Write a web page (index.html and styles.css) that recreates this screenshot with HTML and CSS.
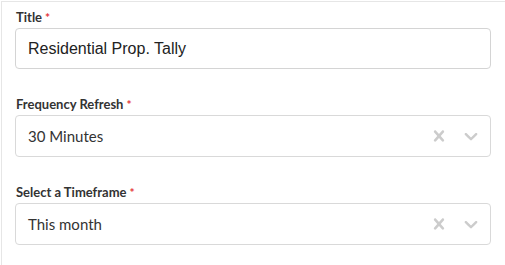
FILE: index.html
```html
<!DOCTYPE html>
<html lang="en">
<head>
    <meta charset="UTF-8">
    <meta name="viewport" content="width=device-width, initial-scale=1.0">
    <title>Widget Settings</title>
    <link rel="stylesheet" href="styles.css">
</head>
<body>
    <div class="panel">
        <div class="field">
            <label class="field-label" for="title">Title<span class="req">*</span></label>
            <input class="text-input" type="text" id="title" value="Residential Prop. Tally">
        </div>

        <div class="field">
            <div class="field-label">Frequency Refresh<span class="req">*</span></div>
            <div class="select">
                <div class="select-value">30 Minutes</div>
                <div class="select-indicators">
                    <span class="indicator">
                        <svg viewBox="0 0 20 20" width="22" height="22"><path d="M14.348 14.849c-0.469 0.469-1.229 0.469-1.697 0l-2.651-3.030-2.651 3.029c-0.469 0.469-1.229 0.469-1.697 0-0.469-0.469-0.469-1.229 0-1.697l2.758-3.15-2.759-3.152c-0.469-0.469-0.469-1.228 0-1.697s1.228-0.469 1.697 0l2.652 3.031 2.651-3.031c0.469-0.469 1.228-0.469 1.697 0s0.469 1.229 0 1.697l-2.758 3.152 2.758 3.150c0.469 0.469 0.469 1.229 0 1.698z"/></svg>
                    </span>
                    <span class="indicator">
                        <svg viewBox="0 0 20 20" width="22" height="22"><path d="M4.516 7.548c0.436-0.446 1.043-0.481 1.576 0l3.908 3.747 3.908-3.747c0.533-0.481 1.141-0.446 1.574 0 0.436 0.445 0.408 1.197 0 1.615-0.406 0.418-4.695 4.502-4.695 4.502-0.217 0.223-0.502 0.335-0.787 0.335s-0.57-0.112-0.789-0.335c0 0-4.287-4.084-4.695-4.502s-0.436-1.17 0-1.615z"/></svg>
                    </span>
                </div>
            </div>
        </div>

        <div class="field">
            <div class="field-label">Select a Timeframe<span class="req">*</span></div>
            <div class="select">
                <div class="select-value">This month</div>
                <div class="select-indicators">
                    <span class="indicator">
                        <svg viewBox="0 0 20 20" width="22" height="22"><path d="M14.348 14.849c-0.469 0.469-1.229 0.469-1.697 0l-2.651-3.030-2.651 3.029c-0.469 0.469-1.229 0.469-1.697 0-0.469-0.469-0.469-1.229 0-1.697l2.758-3.15-2.759-3.152c-0.469-0.469-0.469-1.228 0-1.697s1.228-0.469 1.697 0l2.652 3.031 2.651-3.031c0.469-0.469 1.228-0.469 1.697 0s0.469 1.229 0 1.697l-2.758 3.152 2.758 3.150c0.469 0.469 0.469 1.229 0 1.698z"/></svg>
                    </span>
                    <span class="indicator">
                        <svg viewBox="0 0 20 20" width="22" height="22"><path d="M4.516 7.548c0.436-0.446 1.043-0.481 1.576 0l3.908 3.747 3.908-3.747c0.533-0.481 1.141-0.446 1.574 0 0.436 0.445 0.408 1.197 0 1.615-0.406 0.418-4.695 4.502-4.695 4.502-0.217 0.223-0.502 0.335-0.787 0.335s-0.57-0.112-0.789-0.335c0 0-4.287-4.084-4.695-4.502s-0.436-1.17 0-1.615z"/></svg>
                    </span>
                </div>
            </div>
        </div>
    </div>
</body>
</html>
```

FILE: styles.css
```css
* {
    margin: 0;
    padding: 0;
    box-sizing: border-box;
}

body {
    background: #ffffff;
    font-family: 'Lato', 'Noto Sans', sans-serif;
    color: #333333;
    overflow: hidden;
}

.panel {
    margin: 1px 0 0 1px;
    border-top: 1px solid #e6e6e6;
    border-left: 1px solid #e6e6e6;
    padding: 7px 14px 0 13px;
    min-height: 264px;
}

.field {
    margin-bottom: 27px;
}

.field-label {
    display: block;
    font-size: 13px;
    font-weight: 700;
    line-height: 16px;
    color: #333333;
    margin-bottom: 2px;
    padding-left: 1px;
}

.req {
    color: #e5343a;
    font-size: 12px;
    margin-left: 3px;
}

.text-input {
    display: block;
    width: 100%;
    height: 41px;
    border: 1px solid #d4d4d4;
    border-radius: 4px;
    padding: 0 12px;
    font-family: 'Liberation Sans', Arial, sans-serif;
    font-size: 16px;
    color: #222222;
    background: #ffffff;
    outline: none;
}

.select {
    display: flex;
    align-items: center;
    height: 42px;
    border: 1px solid #d9d9d9;
    border-radius: 4px;
    background: #ffffff;
}

.select-value {
    flex: 1;
    padding-left: 12px;
    font-size: 15px;
    color: #333333;
}

.select-indicators {
    display: flex;
    align-items: center;
    padding-right: 3px;
}

.indicator {
    display: flex;
    padding: 0 5px;
}

.indicator svg {
    fill: #cccccc;
}
```
